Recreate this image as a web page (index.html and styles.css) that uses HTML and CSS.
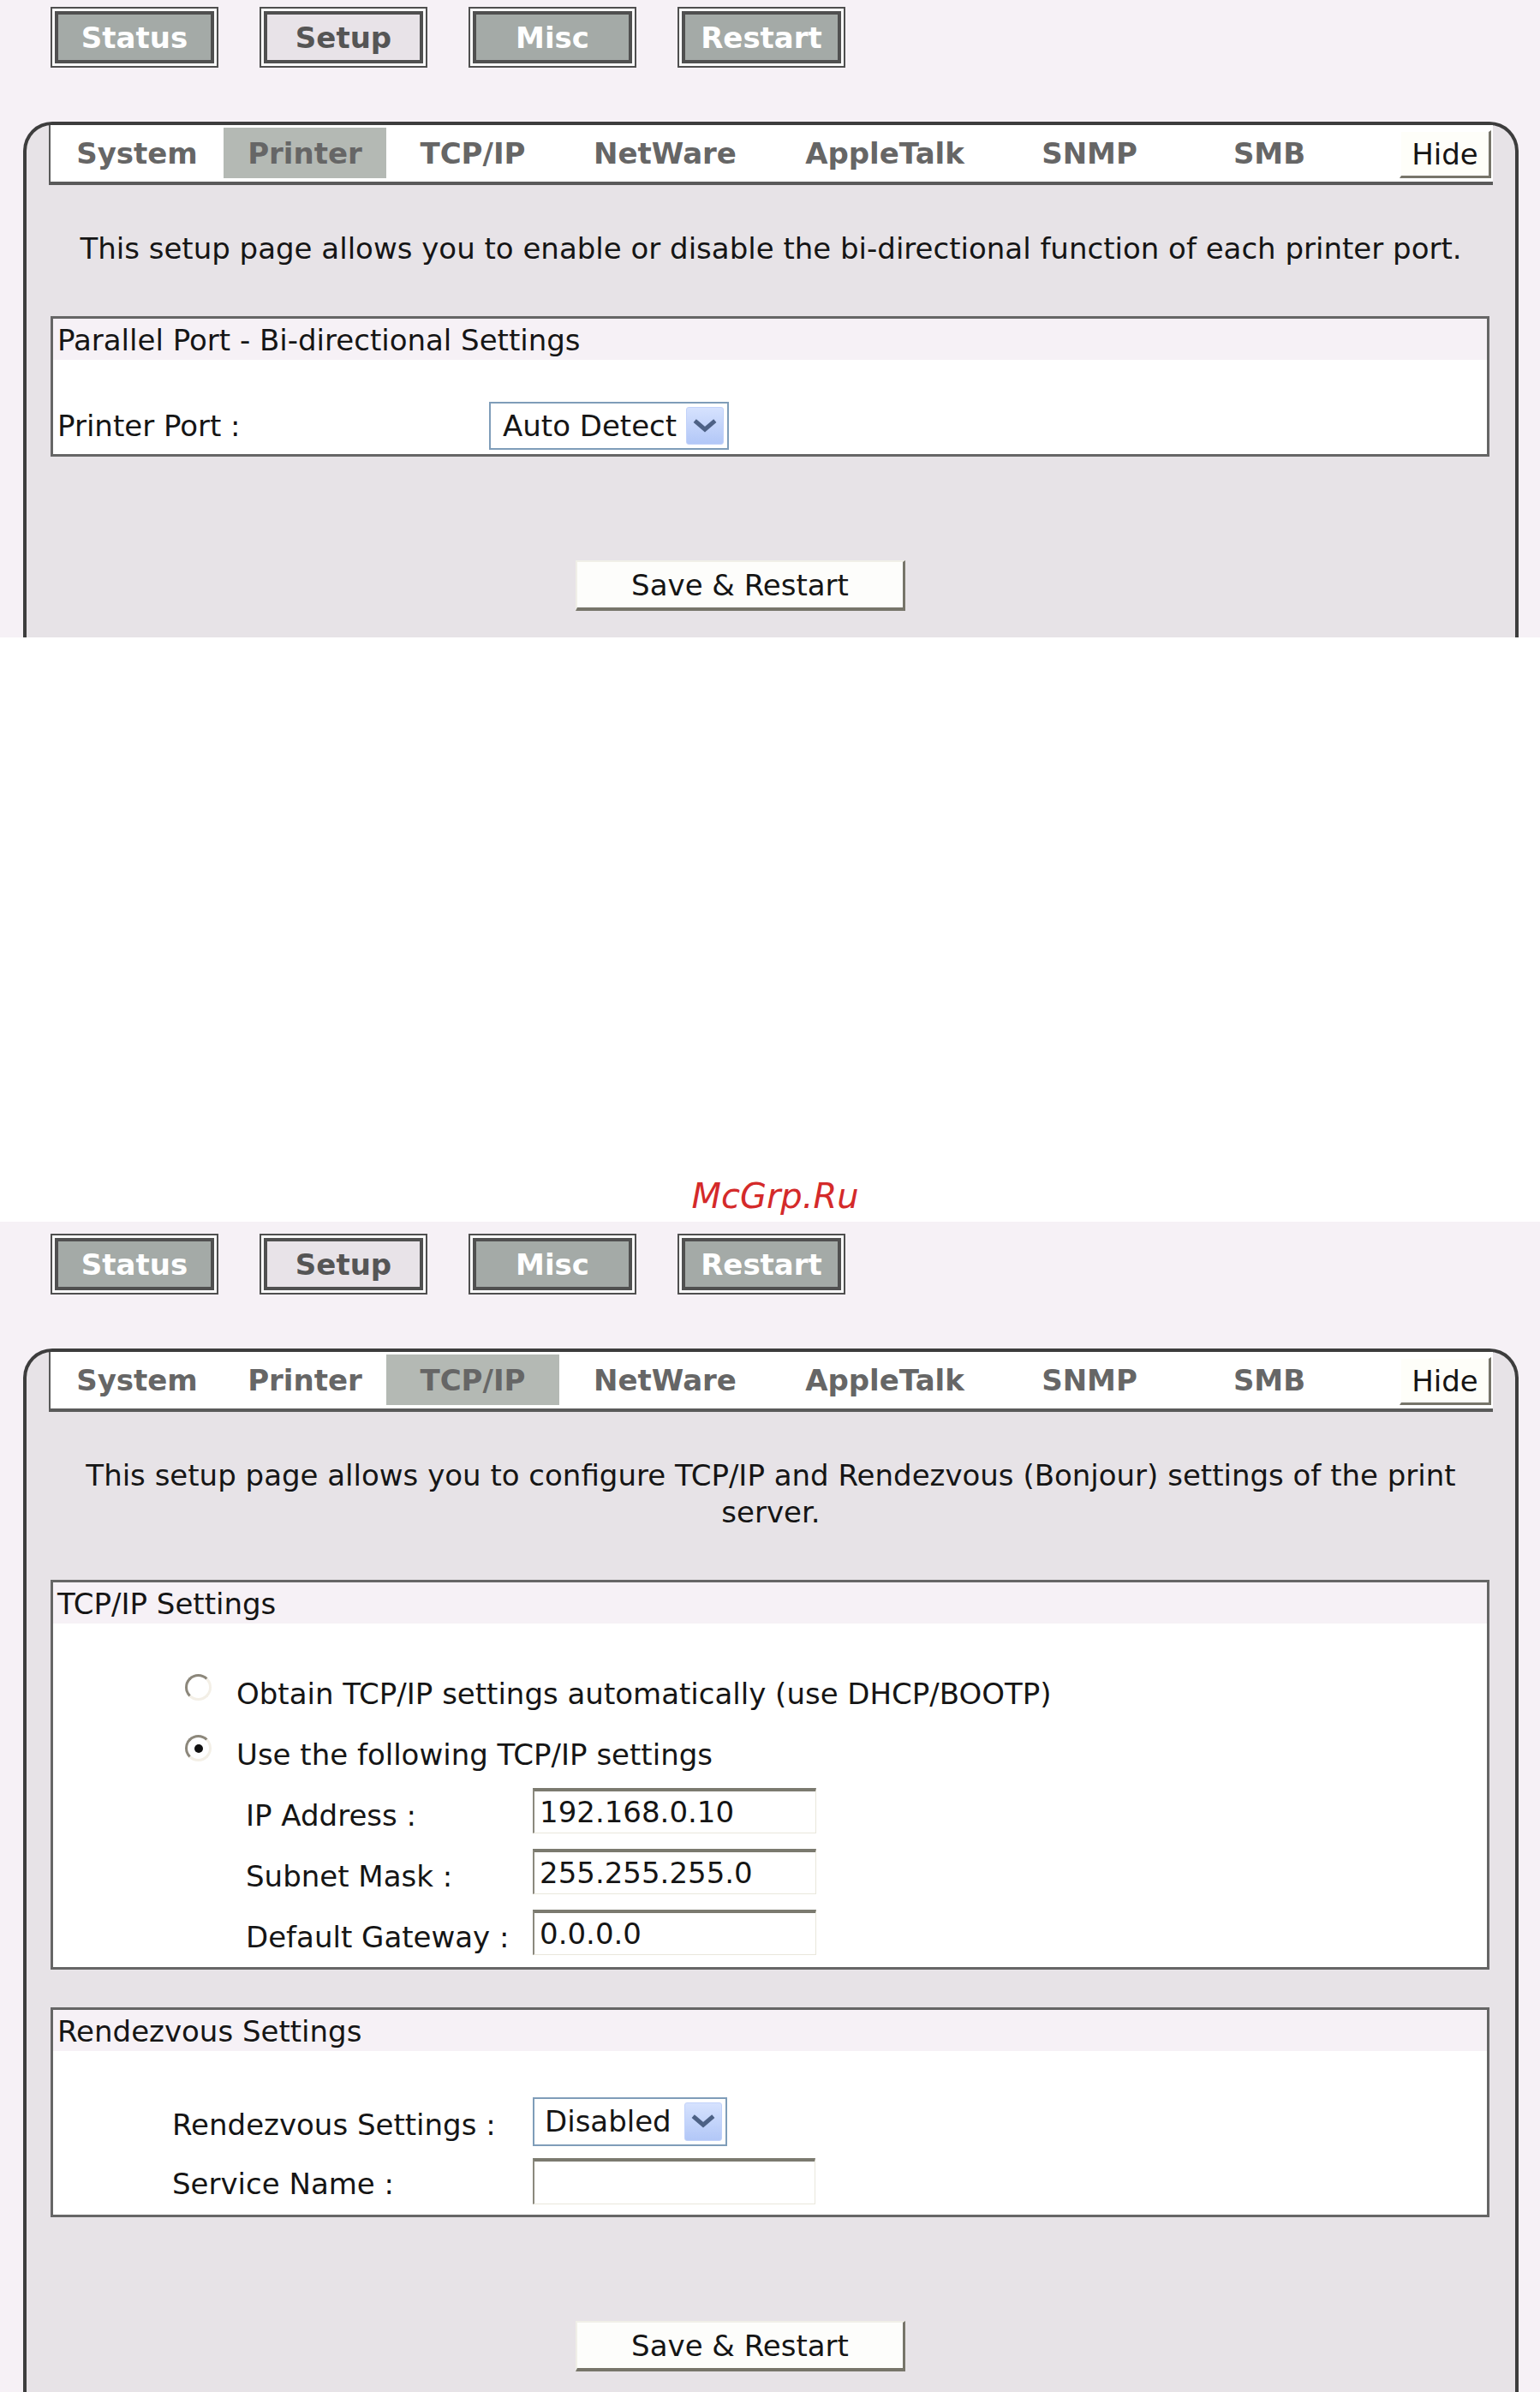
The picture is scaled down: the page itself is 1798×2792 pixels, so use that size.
FILE: index.html
```html
<!DOCTYPE html>
<html lang="en">
<head>
  <meta charset="UTF-8"/>
  <title>Print Server - Setup</title>
  <link rel="stylesheet" href="styles.css">
</head>
<body>
  <!-- Printer page -->
  <div class="shot shot-printer">
    <div class="menu">
      <a class="menu-btn">Status</a>
      <a class="menu-btn current">Setup</a>
      <a class="menu-btn">Misc</a>
      <a class="menu-btn">Restart</a>
    </div>
    <div class="panel">
      <div class="tabs">
        <span class="tab t-system">System</span>
        <span class="tab t-printer active">Printer</span>
        <span class="tab t-tcpip">TCP/IP</span>
        <span class="tab t-netware">NetWare</span>
        <span class="tab t-appletalk">AppleTalk</span>
        <span class="tab t-snmp">SNMP</span>
        <span class="tab t-smb">SMB</span>
        <button class="hide-btn">Hide</button>
      </div>
      <p class="intro">This setup page allows you to enable or disable the bi-directional function of each printer port.</p>
      <div class="group">
        <div class="group-title">Parallel Port - Bi-directional Settings</div>
        <div class="group-body port-body">
          <div class="field-row">
            <label class="lbl">Printer Port :</label>
            <div class="combo combo-port">
              <span class="combo-value">Auto Detect</span>
              <span class="combo-arrow"><svg viewBox="0 0 24 24"><polyline points="5,9 12,15 19,9"/></svg></span>
            </div>
          </div>
        </div>
      </div>
      <div class="actions"><button class="save-btn">Save &amp; Restart</button></div>
    </div>
  </div>

  <div class="gap"><span class="mark">McGrp.Ru</span></div>

  <!-- TCP/IP page -->
  <div class="shot shot-tcp">
    <div class="menu">
      <a class="menu-btn">Status</a>
      <a class="menu-btn current">Setup</a>
      <a class="menu-btn">Misc</a>
      <a class="menu-btn">Restart</a>
    </div>
    <div class="panel">
      <div class="tabs">
        <span class="tab t-system">System</span>
        <span class="tab t-printer">Printer</span>
        <span class="tab t-tcpip active">TCP/IP</span>
        <span class="tab t-netware">NetWare</span>
        <span class="tab t-appletalk">AppleTalk</span>
        <span class="tab t-snmp">SNMP</span>
        <span class="tab t-smb">SMB</span>
        <button class="hide-btn">Hide</button>
      </div>
      <p class="intro">This setup page allows you to configure TCP/IP and Rendezvous (Bonjour) settings of the print server.</p>

      <div class="group">
        <div class="group-title">TCP/IP Settings</div>
        <div class="group-body tcp-body">
          <div class="radio-row"><span class="radio"></span>Obtain TCP/IP settings automatically (use DHCP/BOOTP)</div>
          <div class="radio-row"><span class="radio"><span class="dot"></span></span>Use the following TCP/IP settings</div>
          <div class="field-row">
            <label class="lbl">IP Address :</label>
            <input class="field" type="text" value="192.168.0.10">
          </div>
          <div class="field-row">
            <label class="lbl">Subnet Mask :</label>
            <input class="field" type="text" value="255.255.255.0">
          </div>
          <div class="field-row">
            <label class="lbl">Default Gateway :</label>
            <input class="field" type="text" value="0.0.0.0">
          </div>
        </div>
      </div>

      <div class="group group-next">
        <div class="group-title">Rendezvous Settings</div>
        <div class="group-body rv-body">
          <div class="field-row">
            <label class="lbl">Rendezvous Settings :</label>
            <div class="combo combo-rv">
              <span class="combo-value">Disabled</span>
              <span class="combo-arrow"><svg viewBox="0 0 24 24"><polyline points="5,9 12,15 19,9"/></svg></span>
            </div>
          </div>
          <div class="field-row">
            <label class="lbl">Service Name :</label>
            <input class="field" type="text" value="">
          </div>
        </div>
      </div>
      <div class="actions"><button class="save-btn">Save &amp; Restart</button></div>
    </div>
  </div>
</body>
</html>
```

FILE: styles.css
```css
:root {
  --page: #f6f1f6;
  --panel: #e7e3e7;
  --frame: #3d3d3d;
  --line: #5a5a5a;
  --btn: #a4aaa7;
  --tab-on: #b4b9b4;
  --tab-text: #666;
  --text: #151515;
  --bevel-dark: #77756a;
  --bevel-light: #f0efe8;
}
* { box-sizing: border-box; }
body {
  margin: 0;
  background: #fff;
  color: var(--text);
  font-family: "DejaVu Sans", Verdana, sans-serif;
  font-size: 34px;
}
button, input { font: inherit; color: var(--text); }

.shot { background: var(--page); overflow: hidden; padding-top: 8px; }
.shot-printer { height: 744px; }
.shot-tcp { height: 1366px; padding-top: 14px; }

/* top menu */
.menu { display: flex; gap: 48px; padding-left: 59px; }
.menu-btn {
  width: 196px; height: 71px;
  display: flex; align-items: center; justify-content: center;
  border: 2px solid #4f4f4f;
  box-shadow: inset 0 0 0 3px #fbfbfb, inset 0 0 0 7px #505050;
  background: var(--btn);
  color: #fff; font-weight: bold;
}
.menu-btn.current { background: #e8e3e8; color: #555; }

/* framed panel */
.panel {
  margin: 63px 25px 0 27px;
  border: 4px solid var(--frame); border-bottom: 0;
  border-radius: 34px 34px 0 0;
  background: var(--panel);
  padding: 0 28px 121px;
}
.tabs {
  display: flex;
  height: 70px;
  margin: 0 -2px;
  padding: 3px 0 4px;
  background: #fff;
  border-left: 2px solid var(--line);
  border-bottom: 4px solid var(--line);
}
.tab {
  display: flex; align-items: center; justify-content: center;
  color: var(--tab-text); font-weight: bold;
}
.tab.active { background: var(--tab-on); }
.t-system { width: 202px; }
.t-printer { width: 190px; }
.t-tcpip { width: 202px; }
.t-netware { width: 247px; }
.t-appletalk { width: 266px; }
.t-snmp { width: 212px; }
.t-smb { width: 208px; }
.hide-btn {
  margin: 3px 2px 0 auto;
  width: 107px; padding: 0;
  background: #fefef9;
  border: 2px solid; border-width: 2px 3px 3px 2px;
  border-color: #fff var(--bevel-dark) var(--bevel-dark) #fff;
}

.intro {
  margin: 53px 0 57px;
  text-align: center;
  line-height: 43px;
}

/* settings groups */
.group { margin-right: 2px; border: 3px solid #666; background: #fff; }
.group-next { margin-top: 44px; }
.group-title {
  height: 48px; padding: 2px 5px 0;
  line-height: 46px;
  background: var(--page);
}
.port-body { padding: 48px 0 4px 5px; }
.port-body .field-row { height: 58px; }
.port-body .lbl { width: 504px; }

.tcp-body { padding: 46px 0 0 225px; }
.tcp-body .field-row, .radio-row { height: 71px; }
.tcp-body .lbl { width: 335px; }
.radio-row { display: flex; align-items: center; margin-left: -71px; }

.rv-body { padding: 51px 0 2px 139px; }
.rv-body .field-row { height: 69px; }
.rv-body .lbl { width: 421px; }

.field-row { display: flex; align-items: center; }
.lbl { flex: none; }

.radio {
  width: 31px; height: 31px; flex: none;
  margin: 0 29px 14px 0;
  display: flex; align-items: center; justify-content: center;
  border-radius: 50%;
  border: 3px solid; border-color: #8c877b #f3efe6 #f3efe6 #8c877b;
  background: #fff;
}
.radio .dot { width: 10px; height: 10px; border-radius: 50%; background: #111; }

.field {
  width: 331px; height: 53px;
  margin-bottom: 10px;
  padding: 0 0 0 6px;
  background: #fff;
  border: solid; border-width: 4px 1px 1px 2px;
  border-color: #7b7a6f #e9e7dc #e9e7dc #8b897e;
  outline: none;
}
.rv-body .field { width: 330px; height: 54px; margin-bottom: 6px; }

.combo {
  display: flex; align-items: stretch;
  height: 56px; padding: 4px;
  background: #fff;
  border: 2px solid #7f9db9;
}
.combo-port { width: 280px; }
.combo-rv { width: 227px; height: 57px; margin-bottom: 7px; }
.combo-value { flex: 1; display: flex; align-items: center; padding-left: 10px; }
.combo-rv .combo-value { padding-left: 8px; }
.combo-arrow {
  width: 44px; flex: none;
  display: flex; align-items: center; justify-content: center;
  background: linear-gradient(#d6e2fe, #b2c7f7);
  border: 1px solid #c2d2fa; border-radius: 3px;
}
.combo-arrow svg {
  width: 34px; height: 34px;
  fill: none; stroke: #4d6185; stroke-width: 3.5;
  stroke-linecap: square;
}

.actions { display: flex; padding-left: 613px; margin-top: 121px; }
.save-btn {
  width: 385px; height: 59px; padding: 0;
  background: #fdfdfb;
  border: solid; border-width: 2px 3px 4px 2px;
  border-color: var(--bevel-light) var(--bevel-dark) var(--bevel-dark) var(--bevel-light);
}

/* gap between the two shots */
.gap { height: 682px; padding: 629px 0 0 12px; text-align: center; }
.mark { font-style: italic; font-size: 40px; color: #d42a2a; }
```
